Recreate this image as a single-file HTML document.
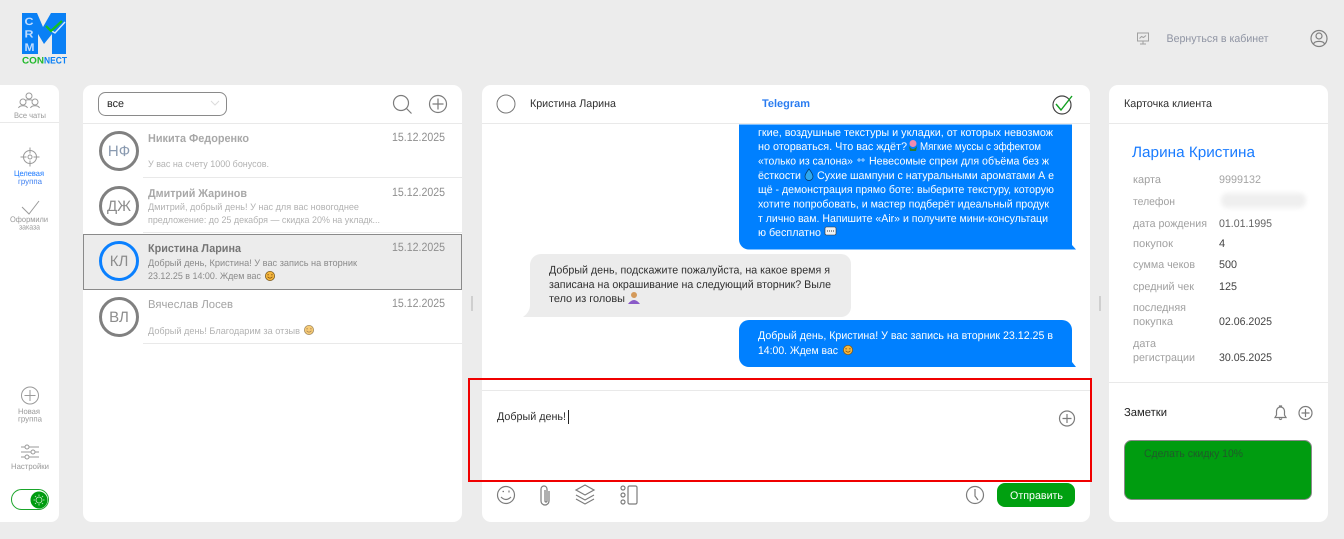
<!DOCTYPE html>
<html lang="ru">
<head>
<meta charset="utf-8">
<title>CRM Connect</title>
<style>
html,body{margin:0;padding:0;width:1344px;height:539px;overflow:hidden;background:#ececec}
svg{display:block;position:absolute;left:0;top:0}
text{font-family:"Liberation Sans",sans-serif;white-space:pre;text-rendering:geometricPrecision}
.i{fill:none;stroke:#7c7c7c;stroke-width:1.2}
.g{fill:none;stroke:#9a9a9a;stroke-width:1}
.sb{font-size:8px;fill:#9a9a9a}
.nm{font-size:11.5px;font-weight:bold;fill:#a8a8a8}
.dt{font-size:12px;fill:#8f8f8f}
.pv{font-size:9.5px;fill:#b2b2b2}
.av{font-size:15px;fill:#8c8c8c;text-anchor:middle}
.w{font-size:11px;fill:#fff}
.d{font-size:11px;fill:#2f2f2f}
.lb{font-size:11px;fill:#a0a0a0}
.v{font-size:11px;fill:#444}
.ln{stroke:#e9e9e9;stroke-width:1}
</style>
</head>
<body>
<svg width="1344" height="539" viewBox="0 0 1344 539" xmlns="http://www.w3.org/2000/svg">
<defs>
<g id="face"><circle r="4.6" fill="#f5b63c" stroke="#7a5a20" stroke-width=".8"/><path d="M-2.4 .8Q0 3.6 2.4 .8" fill="none" stroke="#7a4a10" stroke-width=".8"/><path d="M-2.6-1.2h1.4M1.2-1.2h1.4" stroke="#7a4a10" stroke-width=".8"/></g>
<filter id="bl" x="-20%" y="-50%" width="140%" height="200%"><feGaussianBlur stdDeviation="2.5"/></filter>
</defs>

<!-- logo -->
<path d="M22 13H37L43 27L51 13H66V54H52V34L44 44L38 34V54H22Z" fill="#0a80f5"/>
<text x="24.500" y="25" font-size="10.500" font-weight="bold" fill="#bfdcff" textLength="9" lengthAdjust="spacingAndGlyphs">C</text>
<text x="24.500" y="37.500" font-size="10.500" font-weight="bold" fill="#bfdcff" textLength="9" lengthAdjust="spacingAndGlyphs">R</text>
<text x="24.500" y="51" font-size="11" font-weight="bold" fill="#bfdcff" textLength="10" lengthAdjust="spacingAndGlyphs">M</text>
<path d="M50 30L55 33L65 22" fill="none" stroke="#d6e9ff" stroke-width="1.4"/>
<path d="M46 26L51 31L62 21" fill="none" stroke="#16c21c" stroke-width="2.2"/>
<text x="22" y="63.5" font-size="9.5" font-weight="bold" fill="#22b92c" textLength="22" lengthAdjust="spacingAndGlyphs">CON</text>
<text x="44" y="63.5" font-size="9.5" font-weight="bold" fill="#0a80f5" textLength="23" lengthAdjust="spacingAndGlyphs">NECT</text>

<!-- top right -->
<g fill="none" stroke="#a0a0a0" stroke-width="1"><rect x="1137.500" y="33" width="11" height="8"/><path d="M1143 41v3M1140 44h6M1139.500 38.500l2-2 2 1 2.500-2"/></g>
<text x="1166.500" y="42" font-size="11" fill="#8f94a3" textLength="102" lengthAdjust="spacingAndGlyphs">Вернуться в кабинет</text>
<g fill="none" stroke="#808080" stroke-width="1.2"><circle cx="1319" cy="38.500" r="8"/><circle cx="1319" cy="36" r="3"/><path d="M1313.500 44c1-3.500 10-3.500 11 0"/></g>

<!-- panels -->
<path d="M0 85H51a8 8 0 0 1 8 8V514a8 8 0 0 1-8 8H0Z" fill="#fff"/>
<rect x="83" y="85" width="379" height="437" rx="9" fill="#fff"/>
<rect x="482" y="85" width="608" height="437" rx="9" fill="#fff"/>
<rect x="1109" y="85" width="219" height="437" rx="9" fill="#fff"/>
<rect x="471" y="296" width="2" height="15" fill="#cfcfcf"/>
<rect x="1099" y="296" width="2" height="15" fill="#cfcfcf"/>

<!-- sidebar -->
<g class="g"><circle cx="29" cy="96" r="3"/><circle cx="23" cy="102" r="3"/><circle cx="35" cy="102" r="3"/><path d="M18.500 108c1-3 8-3 9 0M30.500 108c1-3 8-3 9 0M25.500 100.500c1-1 6-1 7 0"/></g>
<text class="sb" x="14" y="118" textLength="32" lengthAdjust="spacingAndGlyphs">Все чаты</text>
<line x1="0" y1="122.500" x2="59" y2="122.500" class="ln"/>
<g class="g"><circle cx="30" cy="157" r="6.500"/><circle cx="30" cy="157" r="2"/><path d="M30 147.500v6M30 160.500v6M20.500 157h6M33.500 157h6"/></g>
<text x="14" y="176" font-size="8" fill="#1a78ff" textLength="30" lengthAdjust="spacingAndGlyphs">Целевая</text>
<text x="18" y="184" font-size="8" fill="#3f80f0" textLength="24" lengthAdjust="spacingAndGlyphs">группа</text>
<path d="M22 207l7 7 10-13" class="g"/>
<text class="sb" x="10" y="222" textLength="38" lengthAdjust="spacingAndGlyphs">Оформили</text>
<text class="sb" x="19" y="229.500" textLength="21" lengthAdjust="spacingAndGlyphs">заказа</text>
<g class="g"><circle cx="30" cy="395.500" r="8.500"/><path d="M30 390v11M24.500 395.500h11"/></g>
<text class="sb" x="18" y="414" textLength="22" lengthAdjust="spacingAndGlyphs">Новая</text>
<text class="sb" x="18" y="421.500" textLength="24" lengthAdjust="spacingAndGlyphs">группа</text>
<g class="g"><path d="M21 447h18M21 452h18M21 457h18"/><circle cx="27" cy="447" r="2" fill="#fff"/><circle cx="33" cy="452" r="2" fill="#fff"/><circle cx="27" cy="457" r="2" fill="#fff"/></g>
<text class="sb" x="11" y="469" textLength="38" lengthAdjust="spacingAndGlyphs">Настройки</text>
<rect x="11.500" y="489.500" width="37" height="20" rx="10" fill="#fff" stroke="#1aa52a" stroke-width="1"/>
<circle cx="39" cy="500" r="8.500" fill="#009c10"/>
<g fill="none" stroke="#cfe9cf" stroke-width=".8"><circle cx="39" cy="500" r="3"/><path d="M39 494.500v1.500M39 504v1.500M33.500 500H35M43 500h1.500M35 496l1 1M42 503l1 1M43 496l-1 1M36 503l-1 1"/></g>

<!-- list header -->
<rect x="98.500" y="92.500" width="128" height="23" rx="7" fill="#fff" stroke="#8a8a8a"/>
<text x="107" y="107" font-size="11" fill="#222" textLength="17" lengthAdjust="spacingAndGlyphs">все</text>
<path d="M211 101l4 4 4-4" fill="none" stroke="#dcdcdc"/>
<g class="i"><circle cx="401" cy="103" r="7.500"/><path d="M406.500 108.500l5 5"/></g>
<g class="i"><circle cx="438" cy="104" r="8.500"/><path d="M438 98.500v11M432.500 104h11"/></g>
<line x1="83" y1="123.500" x2="462" y2="123.500" class="ln"/>

<!-- list items -->
<circle cx="119" cy="151" r="18.500" fill="#fff" stroke="#808080" stroke-width="3"/>
<text class="av" x="119" y="156" style="fill:#8a9ab0">НФ</text>
<text class="nm" x="148" y="142" textLength="101" lengthAdjust="spacingAndGlyphs">Никита Федоренко</text>
<text class="dt" x="392" y="141" textLength="53" lengthAdjust="spacingAndGlyphs">15.12.2025</text>
<text class="pv" x="148" y="167" textLength="121" lengthAdjust="spacingAndGlyphs">У вас на счету 1000 бонусов.</text>
<line x1="143" y1="177.500" x2="462" y2="177.500" class="ln"/>

<circle cx="119" cy="206" r="18.500" fill="#fff" stroke="#808080" stroke-width="3"/>
<text class="av" x="119" y="211">ДЖ</text>
<text class="nm" x="148" y="197" textLength="99" lengthAdjust="spacingAndGlyphs">Дмитрий Жаринов</text>
<text class="dt" x="392" y="196" textLength="53" lengthAdjust="spacingAndGlyphs">15.12.2025</text>
<text class="pv" x="148" y="210" textLength="211" lengthAdjust="spacingAndGlyphs">Дмитрий, добрый день! У нас для вас новогоднее</text>
<text class="pv" x="148" y="223" textLength="232" lengthAdjust="spacingAndGlyphs">предложение: до 25 декабря — скидка 20% на укладк...</text>
<line x1="143" y1="232.500" x2="462" y2="232.500" class="ln"/>

<rect x="83.500" y="234.500" width="378" height="55" fill="#ececec" stroke="#8a8a8a" stroke-width="1"/>
<circle cx="119" cy="261" r="18.500" fill="#ececec" stroke="#0a80ff" stroke-width="3"/>
<text class="av" x="119" y="266">КЛ</text>
<text x="148" y="252" font-size="11.500" font-weight="bold" fill="#757575" textLength="93" lengthAdjust="spacingAndGlyphs">Кристина Ларина</text>
<text class="dt" x="392" y="251" textLength="53" lengthAdjust="spacingAndGlyphs">15.12.2025</text>
<text x="148" y="266" font-size="9.500" fill="#8a8a8a" textLength="209" lengthAdjust="spacingAndGlyphs">Добрый день, Кристина! У вас запись на вторник</text>
<text x="148" y="279" font-size="9.500" fill="#8a8a8a" textLength="113" lengthAdjust="spacingAndGlyphs">23.12.25 в 14:00. Ждем вас</text>
<use href="#face" x="270" y="276"/>

<circle cx="119" cy="317" r="18.500" fill="#fff" stroke="#808080" stroke-width="3"/>
<text class="av" x="119" y="322">ВЛ</text>
<text x="148" y="308" font-size="11.500" fill="#a3a3a3" textLength="85" lengthAdjust="spacingAndGlyphs">Вячеслав Лосев</text>
<text class="dt" x="392" y="307" textLength="53" lengthAdjust="spacingAndGlyphs">15.12.2025</text>
<text class="pv" x="148" y="334" textLength="152" lengthAdjust="spacingAndGlyphs">Добрый день! Благодарим за отзыв</text>
<g opacity=".7"><use href="#face" x="309" y="330"/></g>
<line x1="143" y1="343.500" x2="462" y2="343.500" class="ln"/>

<!-- chat header -->
<circle cx="506" cy="104" r="9" fill="#fff" stroke="#777" stroke-width="1"/>
<text class="d" x="530" y="107" textLength="86" lengthAdjust="spacingAndGlyphs">Кристина Ларина</text>
<text x="762" y="107" font-size="11" font-weight="bold" fill="#2a7cf0" textLength="48" lengthAdjust="spacingAndGlyphs">Telegram</text>
<circle cx="1062" cy="105" r="9" fill="none" stroke="#444" stroke-width="1.200"/>
<path d="M1056 104l5 6 11-14" fill="none" stroke="#12a020" stroke-width="1.400"/>
<line x1="482" y1="123.500" x2="1090" y2="123.500" class="ln"/>

<!-- blue bubble 1 -->
<path d="M739 124.500H1072V245L1076 249.500H749a10 10 0 0 1-10-10Z" fill="#0080ff"/>
<text class="w" x="758" y="136" textLength="295" lengthAdjust="spacingAndGlyphs">гкие, воздушные текстуры и укладки, от которых невозмож</text>
<text class="w" x="758" y="150" textLength="149" lengthAdjust="spacingAndGlyphs">но оторваться. Что вас ждёт?</text>
<circle cx="913" cy="143.500" r="3.500" fill="#f08bb0"/><path d="M909 146q4 6 8 0l-1 5h-6Z" fill="#2a7a30"/>
<text class="w" x="920" y="150" textLength="121" lengthAdjust="spacingAndGlyphs">Мягкие муссы с эффектом</text>
<text class="w" x="758" y="164.500" textLength="95" lengthAdjust="spacingAndGlyphs">«только из салона»</text>
<path d="M857 160h8M859 158v4M863 158v4" stroke="#a8d4ff" stroke-width="1"/>
<text class="w" x="869" y="164.500" textLength="180" lengthAdjust="spacingAndGlyphs">Невесомые спреи для объёма без ж</text>
<text class="w" x="758" y="179" textLength="43" lengthAdjust="spacingAndGlyphs">ёсткости</text>
<path d="M809 169q4 5 4 7.500a4 4 0 0 1-8 0q0-2.500 4-7.500Z" fill="#2fa8ef" stroke="#04355e" stroke-width=".7"/>
<text class="w" x="817" y="179" textLength="237" lengthAdjust="spacingAndGlyphs">Сухие шампуни с натуральными ароматами А е</text>
<text class="w" x="758" y="193" textLength="296" lengthAdjust="spacingAndGlyphs">щё - демонстрация прямо боте: выберите текстуру, которую</text>
<text class="w" x="758" y="207.500" textLength="291" lengthAdjust="spacingAndGlyphs">хотите попробовать, и мастер подберёт идеальный продук</text>
<text class="w" x="758" y="222" textLength="290" lengthAdjust="spacingAndGlyphs">т лично вам. Напишите «Air» и получите мини-консультаци</text>
<text class="w" x="758" y="236" textLength="63" lengthAdjust="spacingAndGlyphs">ю бесплатно</text>
<rect x="825" y="227" width="11" height="8" rx="1.500" fill="#eef2f5" stroke="#333" stroke-width=".6"/><path d="M827 231h7" stroke="#333" stroke-dasharray="1 1"/>

<!-- grey bubble -->
<path d="M541 254H841a10 10 0 0 1 10 10V307a10 10 0 0 1-10 10H523Q530 312 530 305V265a11 11 0 0 1 11-11Z" fill="#ececec"/>
<text class="d" x="549" y="273.500" textLength="281" lengthAdjust="spacingAndGlyphs">Добрый день, подскажите пожалуйста, на какое время я</text>
<text class="d" x="549" y="288" textLength="282" lengthAdjust="spacingAndGlyphs">записана на окрашивание на следующий вторник? Выле</text>
<text class="d" x="549" y="302" textLength="76" lengthAdjust="spacingAndGlyphs">тело из головы</text>
<circle cx="634" cy="295" r="3" fill="#d49a5a"/><path d="M628 304q6-8 12 0Z" fill="#8a5ac8"/>

<!-- blue bubble 2 -->
<path d="M749 320H1062a10 10 0 0 1 10 10V362L1076 367H749a10 10 0 0 1-10-10V330a10 10 0 0 1 10-10Z" fill="#0080ff"/>
<text class="w" x="758" y="339" textLength="295" lengthAdjust="spacingAndGlyphs">Добрый день, Кристина! У вас запись на вторник 23.12.25 в</text>
<text class="w" x="758" y="354" textLength="80" lengthAdjust="spacingAndGlyphs">14:00. Ждем вас</text>
<use href="#face" x="848" y="350"/>

<!-- input -->
<line x1="482" y1="390.500" x2="1090" y2="390.500" class="ln"/>
<text class="d" x="497" y="420" textLength="69" lengthAdjust="spacingAndGlyphs">Добрый день!</text>
<rect x="568" y="410" width="1" height="14" fill="#222"/>
<g class="i" stroke-width="1"><circle cx="1067" cy="418.500" r="7.500"/><path d="M1067 414v9M1062.500 418.500h9"/></g>
<rect x="469" y="379" width="622" height="102" fill="none" stroke="#f00000" stroke-width="2"/>

<!-- toolbar -->
<g class="i" stroke-width="1.100">
<circle cx="506" cy="495" r="8.500"/><path d="M501 497q5 5 10 0M502.500 491.500h1.500M509 490.500v2"/>
<path d="M549 491v10a4 4 0 0 1-8 0v-12a3 3 0 0 1 6 0v12a1 1 0 0 1-2 0v-11"/>
<path d="M585 485l9 5-9 5-9-5ZM576 495l9 5 9-5M576 499l9 5 9-5"/>
<circle cx="623" cy="488" r="2"/><circle cx="623" cy="495" r="2"/><circle cx="623" cy="502" r="2"/><rect x="628" y="486" width="9" height="18" rx="1.500"/>
<circle cx="975" cy="495" r="8.500"/><path d="M975 489v7l3 4"/>
</g>
<rect x="997" y="483" width="78" height="24" rx="8" fill="#00a010"/>
<text x="1010" y="499" font-size="11" fill="#fff" textLength="53" lengthAdjust="spacingAndGlyphs">Отправить</text>

<!-- card -->
<text class="d" x="1124" y="107" textLength="88" lengthAdjust="spacingAndGlyphs">Карточка клиента</text>
<line x1="1109" y1="123.500" x2="1328" y2="123.500" class="ln"/>
<text x="1132" y="157" font-size="15" fill="#1a7cff" textLength="123" lengthAdjust="spacingAndGlyphs">Ларина Кристина</text>
<text class="lb" x="1133" y="183" textLength="28" lengthAdjust="spacingAndGlyphs">карта</text>
<text class="v" x="1219" y="183" style="fill:#a5a5a5" textLength="42" lengthAdjust="spacingAndGlyphs">9999132</text>
<text class="lb" x="1133" y="205" textLength="42" lengthAdjust="spacingAndGlyphs">телефон</text>
<rect x="1221" y="193" width="85" height="15" rx="7" fill="#efefef" filter="url(#bl)"/>
<text class="lb" x="1133" y="227" textLength="74" lengthAdjust="spacingAndGlyphs">дата рождения</text>
<text class="v" x="1219" y="227" style="fill:#666" textLength="53" lengthAdjust="spacingAndGlyphs">01.01.1995</text>
<text class="lb" x="1133" y="247" textLength="40" lengthAdjust="spacingAndGlyphs">покупок</text>
<text class="v" x="1219" y="247">4</text>
<text class="lb" x="1133" y="268" textLength="62" lengthAdjust="spacingAndGlyphs">сумма чеков</text>
<text class="v" x="1219" y="268" textLength="18" lengthAdjust="spacingAndGlyphs">500</text>
<text class="lb" x="1133" y="290" textLength="61" lengthAdjust="spacingAndGlyphs">средний чек</text>
<text class="v" x="1219" y="290" textLength="18" lengthAdjust="spacingAndGlyphs">125</text>
<text class="lb" x="1133" y="311" textLength="53" lengthAdjust="spacingAndGlyphs">последняя</text>
<text class="lb" x="1133" y="325" textLength="40" lengthAdjust="spacingAndGlyphs">покупка</text>
<text class="v" x="1219" y="325" textLength="53" lengthAdjust="spacingAndGlyphs">02.06.2025</text>
<text class="lb" x="1133" y="347" textLength="23" lengthAdjust="spacingAndGlyphs">дата</text>
<text class="lb" x="1133" y="361" textLength="62" lengthAdjust="spacingAndGlyphs">регистрации</text>
<text class="v" x="1219" y="361" textLength="53" lengthAdjust="spacingAndGlyphs">30.05.2025</text>
<line x1="1109" y1="382.500" x2="1328" y2="382.500" class="ln"/>
<text x="1124" y="416" font-size="11.500" fill="#222" textLength="43" lengthAdjust="spacingAndGlyphs">Заметки</text>
<g class="i" stroke-width="1"><path d="M1275 417.500h11l-1.500-2.500v-4a4 4 0 0 0-8 0v4ZM1279.500 407v-1h2v1M1279 418.500q1.500 2 3 0"/></g>
<g class="i" stroke-width="1"><circle cx="1305.500" cy="413" r="6.500"/><path d="M1305.500 409v8M1301.500 413h8"/></g>
<rect x="1124.500" y="440.500" width="187" height="59" rx="7" fill="#009c10" stroke="#8a8a8a"/>
<text x="1144" y="457" font-size="11" fill="#1f5a2a" textLength="99" lengthAdjust="spacingAndGlyphs">Сделать скидку 10%</text>
</svg>
</body>
</html>
